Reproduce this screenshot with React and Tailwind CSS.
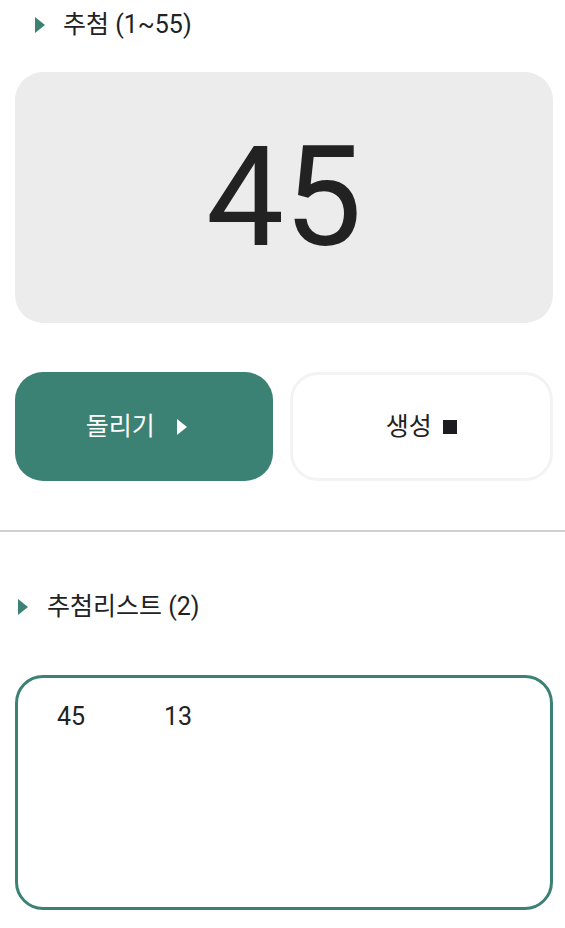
import React from 'react';

const font = { fontFamily: 'Roboto, "Noto Sans CJK KR", sans-serif' };

function Tri({ className }) {
  return (
    <svg width="10" height="16" viewBox="0 0 10 16" className={className}>
      <path d="M0 0 L10 8 L0 16 Z" fill="currentColor" />
    </svg>
  );
}

export default function App() {
  const picks = [45, 13];

  return (
    <div className="w-[565px] min-h-[928px] bg-white text-[#222]" style={font}>
      <div className="pl-[15px] pr-[12px]">
        <div className="h-[50px] flex items-center">
          <Tri className="ml-[20px] text-[#3b8275]" />
          <span className="ml-[18px] text-[25px]">추첨 (1~55)</span>
        </div>

        <div className="mt-[22px] h-[251px] rounded-[28px] bg-[#ececec] flex items-center justify-center">
          <span className="text-[139px] leading-none text-[#222]">45</span>
        </div>

        <div className="mt-[49px] flex gap-[17px]">
          <button className="flex-1 h-[109px] rounded-[28px] bg-[#3b8275] text-white flex items-center justify-center">
            <span className="text-[25px]">돌리기</span>
            <Tri className="ml-[22px] mr-[15px] text-white" />
          </button>
          <button className="flex-1 h-[109px] rounded-[28px] bg-white border-[3px] border-[#f3f3f4] flex items-center justify-center">
            <span className="text-[25px]">생성</span>
            <span className="ml-[11px] w-[14px] h-[14px] bg-[#1c1b20]" />
          </button>
        </div>
      </div>

      <div className="mt-[49px] h-[2px] bg-[#d0d0d0]" />

      <div className="pl-[15px] pr-[12px]">
        <div className="mt-[50px] h-[50px] flex items-center">
          <Tri className="ml-[3px] text-[#3b8275]" />
          <span className="ml-[19px] text-[25px]">추첨리스트 (2)</span>
        </div>

        <div className="mt-[43px] h-[235px] rounded-[28px] border-[3px] border-[#3b8275] px-[39px] pt-[26px]">
          <div className="flex">
            {picks.map((n) => (
              <span key={n} className="w-[107px] text-[25px] leading-none">
                {n}
              </span>
            ))}
          </div>
        </div>
      </div>
    </div>
  );
}
